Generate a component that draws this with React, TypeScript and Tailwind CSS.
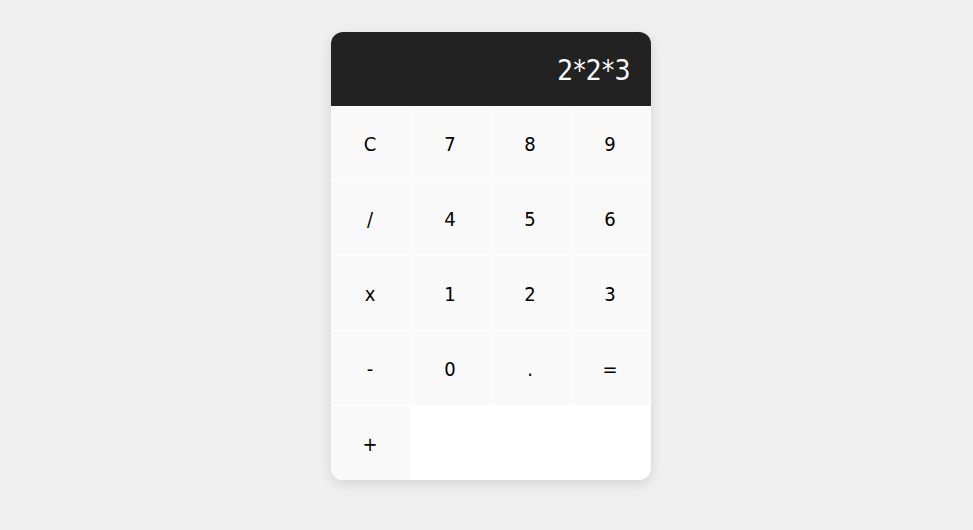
import React from "react";

const keys = ["C", "7", "8", "9", "/", "4", "5", "6", "x", "1", "2", "3", "-", "0", ".", "=", "+"];

export default function App() {
  return (
    <div className="min-h-screen w-full bg-[#f0f0f0] flex justify-center pt-8 pl-2" style={{ fontFamily: '"DejaVu Sans Condensed", "DejaVu Sans", sans-serif' }}>
      <div className="w-[320px] h-[448px] bg-white rounded-xl overflow-hidden shadow-[0_4px_14px_rgba(0,0,0,0.12)] flex flex-col">
        <div className="h-[74px] shrink-0 bg-[#222222] text-white text-[28px] flex items-center justify-end pr-5 pt-[3px]">2*2*3</div>
        <div className="grid grid-cols-4">
          {keys.map((k) => (
            <div key={k} className="h-[75px] bg-[#f9f9f9] border-r border-b border-white flex items-center justify-center text-[20px] text-black pt-[2px]">
              {k}
            </div>
          ))}
        </div>
      </div>
    </div>
  );
}
